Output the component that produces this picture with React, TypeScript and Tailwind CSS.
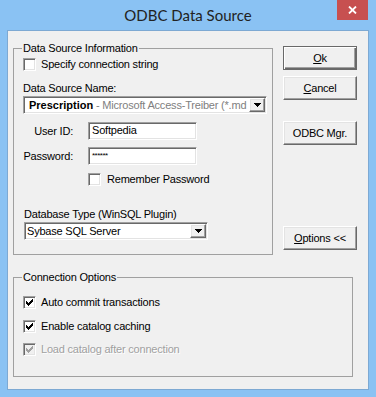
import React from "react";

const sunken =
  "border border-t-[#a0a0a0] border-l-[#a0a0a0] border-r-white border-b-white shadow-[inset_1px_1px_0_#696969,inset_-1px_-1px_0_#e3e3e3]";
const raised =
  "border border-t-white border-l-white border-r-[#696969] border-b-[#696969] shadow-[inset_-1px_-1px_0_#a0a0a0,inset_1px_1px_0_#e3e3e3]";

function Check({ checked = false, disabled = false }: { checked?: boolean; disabled?: boolean }) {
  const fill = disabled ? "#a0a0a0" : "#000";
  return (
    <span className={`flex h-[13px] w-[13px] shrink-0 items-center justify-center ${sunken} ${disabled ? "bg-[#f0f0f0]" : "bg-white"}`}>
      {checked && (
        <svg width="7" height="7" viewBox="0 0 7 7" shapeRendering="crispEdges" fill={fill}>
          <rect x="6" y="0" width="1" height="1" />
          <rect x="5" y="1" width="2" height="1" />
          <rect x="0" y="2" width="1" height="1" />
          <rect x="4" y="2" width="3" height="1" />
          <rect x="0" y="3" width="2" height="1" />
          <rect x="3" y="3" width="3" height="1" />
          <rect x="0" y="4" width="5" height="1" />
          <rect x="1" y="5" width="3" height="1" />
          <rect x="2" y="6" width="1" height="1" />
        </svg>
      )}
    </span>
  );
}

function Arrow() {
  return (
    <span className={`flex h-full w-[16px] shrink-0 items-center justify-center bg-[#f0f0f0] ${raised}`}>
      <svg width="7" height="4" viewBox="0 0 7 4" shapeRendering="crispEdges" fill="#000">
        <rect x="0" y="0" width="7" height="1" />
        <rect x="1" y="1" width="5" height="1" />
        <rect x="2" y="2" width="3" height="1" />
        <rect x="3" y="3" width="1" height="1" />
      </svg>
    </span>
  );
}

function Btn({ children, isDefault = false, className = "" }: { children: React.ReactNode; isDefault?: boolean; className?: string }) {
  const frame = isDefault
    ? "border border-[#696969] shadow-[inset_1px_1px_0_#fff,inset_-1px_-1px_0_#696969,inset_-2px_-2px_0_#a0a0a0]"
    : raised;
  return (
    <div className={`flex h-[24px] w-[74px] items-center justify-center bg-[#f0f0f0] ${frame} ${className}`}>
      {children}
    </div>
  );
}

export default function App() {
  return (
    <div className="flex h-[397px] w-[376px] flex-col bg-[#8ac2f3]">
      <div className="grid h-[30px] grid-cols-[1fr_auto_1fr] items-start">
        <div />
        <div className="pt-[6px] font-['Lato',sans-serif] text-[15px] leading-[18px] text-[#222]">ODBC Data Source</div>
        <div className="flex justify-end pr-[8px]">
          <div className="flex h-[20px] w-[31px] items-center justify-center bg-[#c75050]">
            <svg width="9" height="8" viewBox="0 0 9 8">
              <path d="M1 0.5 L8 7.5 M8 0.5 L1 7.5" stroke="#fff" strokeWidth="1.8" />
            </svg>
          </div>
        </div>
      </div>

      <div className="mx-[7px] h-[360px] border border-[#7da9d3] bg-[#f0f0f0] pl-[5px] pt-[11px] font-['Liberation_Sans',Arial,sans-serif] text-[11px] leading-[13px] tracking-[-0.2px] text-black">
        <div className="flex items-start">
          <fieldset className="h-[213px] w-[260px] border border-[#a0a0a0] pl-[8px]">
            <legend className="px-px">Data Source Information</legend>
            <label className="ml-px mt-[3px] flex h-[13px] items-center gap-[5px]">
              <Check />
              <span>Specify connection string</span>
            </label>
            <div className="ml-px mt-[11px]">Data Source Name:</div>
            <div className={`ml-px mt-px flex h-[18px] w-[244px] bg-white p-px ${sunken}`}>
              <div className="flex-1 whitespace-nowrap pl-[4px] leading-[14px]">
                <span className="font-bold tracking-[0px]">Prescription</span>
                <span className="text-[#808080]"> - Microsoft Access-Treiber (*.md</span>
              </div>
              <Arrow />
            </div>

            <div className="mt-[8px] flex items-center">
              <span className="w-[51px] text-right">User ID:</span>
              <div className={`ml-[15px] h-[18px] w-[109px] bg-white pl-[3px] pt-[1px] ${sunken}`}>Softpedia</div>
            </div>
            <div className="mt-[7px] flex items-center">
              <span className="w-[51px] text-right">Password:</span>
              <div className={`ml-[15px] h-[18px] w-[109px] bg-white pl-[3px] pt-[1px] text-[8px] tracking-[-0.5px] ${sunken}`}>******</div>
            </div>
            <label className="ml-[66px] mt-[8px] flex h-[13px] items-center gap-[6px]">
              <Check />
              <span>Remember Password</span>
            </label>

            <div className="ml-[2px] mt-[22px]">Database Type (WinSQL Plugin)</div>
            <div className={`ml-[2px] mt-px flex h-[18px] w-[184px] bg-white p-px ${sunken}`}>
              <div className="flex-1 whitespace-nowrap pl-[1px] leading-[14px]">Sybase SQL Server</div>
              <Arrow />
            </div>
          </fieldset>

          <div className="ml-[10px] mt-[4px] flex flex-col">
            <Btn isDefault>
              <span><u className="underline-offset-[1px]">O</u>k</span>
            </Btn>
            <Btn className="mt-[6px]">
              <span><u className="underline-offset-[1px]">C</u>ancel</span>
            </Btn>
            <Btn className="mt-[21px]">ODBC Mgr.</Btn>
            <Btn className="mt-[81px]">
              <span><u className="underline-offset-[1px]">O</u>ptions &lt;&lt;</span>
            </Btn>
          </div>
        </div>

        <fieldset className="mt-[16px] h-[106px] w-[340px] border border-[#a0a0a0] pl-[8px]">
          <legend className="px-px">Connection Options</legend>
          <label className="ml-px mt-[12px] flex h-[13px] items-center gap-[5px]">
            <Check checked />
            <span>Auto commit transactions</span>
          </label>
          <label className="ml-px mt-[11px] flex h-[13px] items-center gap-[5px]">
            <Check checked />
            <span>Enable catalog caching</span>
          </label>
          <label className="ml-px mt-[10px] flex h-[13px] items-center gap-[5px]">
            <Check checked disabled />
            <span className="text-[#a0a0a0] [text-shadow:1px_1px_0_#fff]">Load catalog after connection</span>
          </label>
        </fieldset>
      </div>
    </div>
  );
}
